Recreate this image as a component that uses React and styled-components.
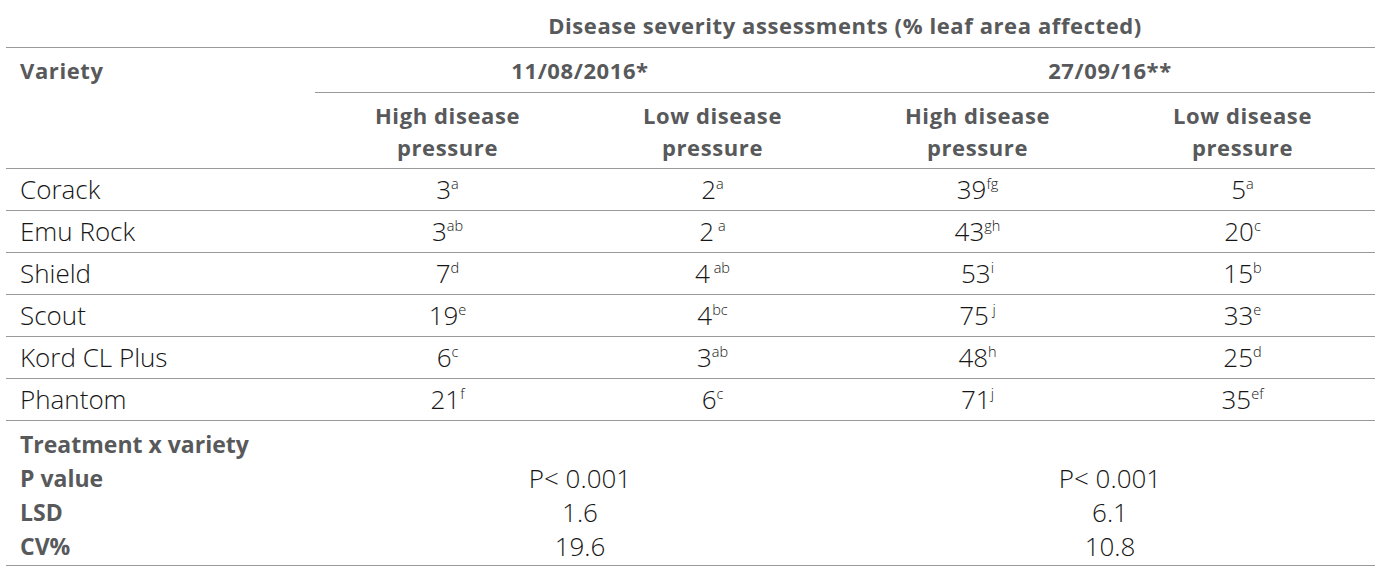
import React from 'react';
import styled, { createGlobalStyle } from 'styled-components';

const GlobalStyle = createGlobalStyle`
  body {
    margin: 0;
    background: #ffffff;
  }
`;

const Wrap = styled.div`
  padding: 0 10px 0 6px;
`;

const Table = styled.table`
  width: 1369px;
  border-collapse: collapse;
  table-layout: fixed;
  font-family: "Open Sans", "Liberation Sans", sans-serif;
`;

const HeadCell = styled.th`
  padding: ${(p) => p.$pt || 0}px 14px 0;
  font-size: 22px;
  font-weight: 700;
  letter-spacing: 0.6px;
  color: #58595b;
  text-align: ${(p) => p.$align || 'center'};
  vertical-align: ${(p) => p.$valign || 'middle'};
  border-bottom: ${(p) => (p.$line ? '1px solid #9a9a9a' : 'none')};
  line-height: 32px;
`;

const TitleRow = styled.tr`
  height: 47px;
`;

const DateRow = styled.tr`
  height: 45px;
`;

const SubHeadRow = styled.tr`
  height: 76px;
`;

const DataRow = styled.tr`
  height: 42px;
`;

const NameCell = styled.td`
  padding: 0 14px;
  font-size: 26px;
  font-weight: 300;
  color: #161616;
  border-bottom: 1px solid #9a9a9a;
  white-space: nowrap;
`;

const ValueCell = styled.td`
  padding: 0;
  font-size: 26px;
  font-weight: 300;
  color: #161616;
  text-align: center;
  border-bottom: 1px solid #9a9a9a;
  white-space: nowrap;
`;

const Sup = styled.span`
  font-size: 14.5px;
  vertical-align: 0.72em;
  line-height: 0;
  white-space: pre;
`;

const StatRow = styled.tr`
  height: ${(p) => (p.$first ? 41 : p.$last ? 36 : 34)}px;
`;

const StatLabel = styled.td`
  padding: ${(p) => (p.$first ? 7 : 0)}px 14px ${(p) => (p.$last ? 2 : 0)}px;
  font-size: 23px;
  font-weight: 700;
  line-height: 28px;
  color: #58595b;
  white-space: nowrap;
  border-bottom: ${(p) => (p.$last ? '1px solid #9a9a9a' : 'none')};
`;

const StatValue = styled.td`
  padding: ${(p) => (p.$first ? 7 : 0)}px 0 ${(p) => (p.$last ? 2 : 0)}px;
  font-size: 26px;
  font-weight: 300;
  font-stretch: 93%;
  line-height: 28px;
  color: #161616;
  text-align: center;
  white-space: nowrap;
  border-bottom: ${(p) => (p.$last ? '1px solid #9a9a9a' : 'none')};
`;

const rows = [
  { name: 'Corack', values: [['3', 'a'], ['2', 'a'], ['39', 'fg'], ['5', 'a']] },
  { name: 'Emu Rock', values: [['3', 'ab'], ['2', ' a'], ['43', 'gh'], ['20', 'c']] },
  { name: 'Shield', values: [['7', 'd'], ['4', ' ab'], ['53', 'i'], ['15', 'b']] },
  { name: 'Scout', values: [['19', 'e'], ['4', 'bc'], ['75', ' j'], ['33', 'e']] },
  { name: 'Kord CL Plus', values: [['6', 'c'], ['3', 'ab'], ['48', 'h'], ['25', 'd']] },
  { name: 'Phantom', values: [['21', 'f'], ['6', 'c'], ['71', 'j'], ['35', 'ef']] },
];

const stats = [
  { label: 'Treatment x variety', values: null },
  { label: 'P value', values: ['P< 0.001', 'P< 0.001'] },
  { label: 'LSD', values: ['1.6', '6.1'] },
  { label: 'CV%', values: ['19.6', '10.8'] },
];

const pressures = ['High', 'Low', 'High', 'Low'];

export default function App() {
  return (
    <>
      <GlobalStyle />
      <Wrap>
        <Table>
          <colgroup>
            <col style={{ width: 309 }} />
            <col style={{ width: 265 }} />
            <col style={{ width: 265 }} />
            <col style={{ width: 265 }} />
            <col style={{ width: 265 }} />
          </colgroup>
          <thead>
            <TitleRow>
              <HeadCell $line />
              <HeadCell colSpan={4} $line $pt={3}>
                Disease severity assessments (% leaf area affected)
              </HeadCell>
            </TitleRow>
            <DateRow>
              <HeadCell rowSpan={2} $align="left" $valign="top" $line $pt={6}>
                Variety
              </HeadCell>
              <HeadCell colSpan={2} $line $pt={1}>11/08/2016*</HeadCell>
              <HeadCell colSpan={2} $line $pt={1}>27/09/16**</HeadCell>
            </DateRow>
            <SubHeadRow>
              {pressures.map((p, i) => (
                <HeadCell key={i} $line $pt={2}>
                  {p} disease
                  <br />
                  pressure
                </HeadCell>
              ))}
            </SubHeadRow>
          </thead>
          <tbody>
            {rows.map((row) => (
              <DataRow key={row.name}>
                <NameCell>{row.name}</NameCell>
                {row.values.map(([v, s], i) => (
                  <ValueCell key={i}>
                    {v}
                    <Sup>{s}</Sup>
                  </ValueCell>
                ))}
              </DataRow>
            ))}
            {stats.map((st, i) => {
              const first = i === 0;
              const last = i === stats.length - 1;
              return (
                <StatRow key={st.label} $first={first} $last={last}>
                  <StatLabel $first={first} $last={last}>{st.label}</StatLabel>
                  {st.values ? (
                    st.values.map((v, j) => (
                      <StatValue key={j} colSpan={2} $first={first} $last={last}>
                        {v}
                      </StatValue>
                    ))
                  ) : (
                    <StatValue colSpan={4} $first={first} $last={last} />
                  )}
                </StatRow>
              );
            })}
          </tbody>
        </Table>
      </Wrap>
    </>
  );
}
